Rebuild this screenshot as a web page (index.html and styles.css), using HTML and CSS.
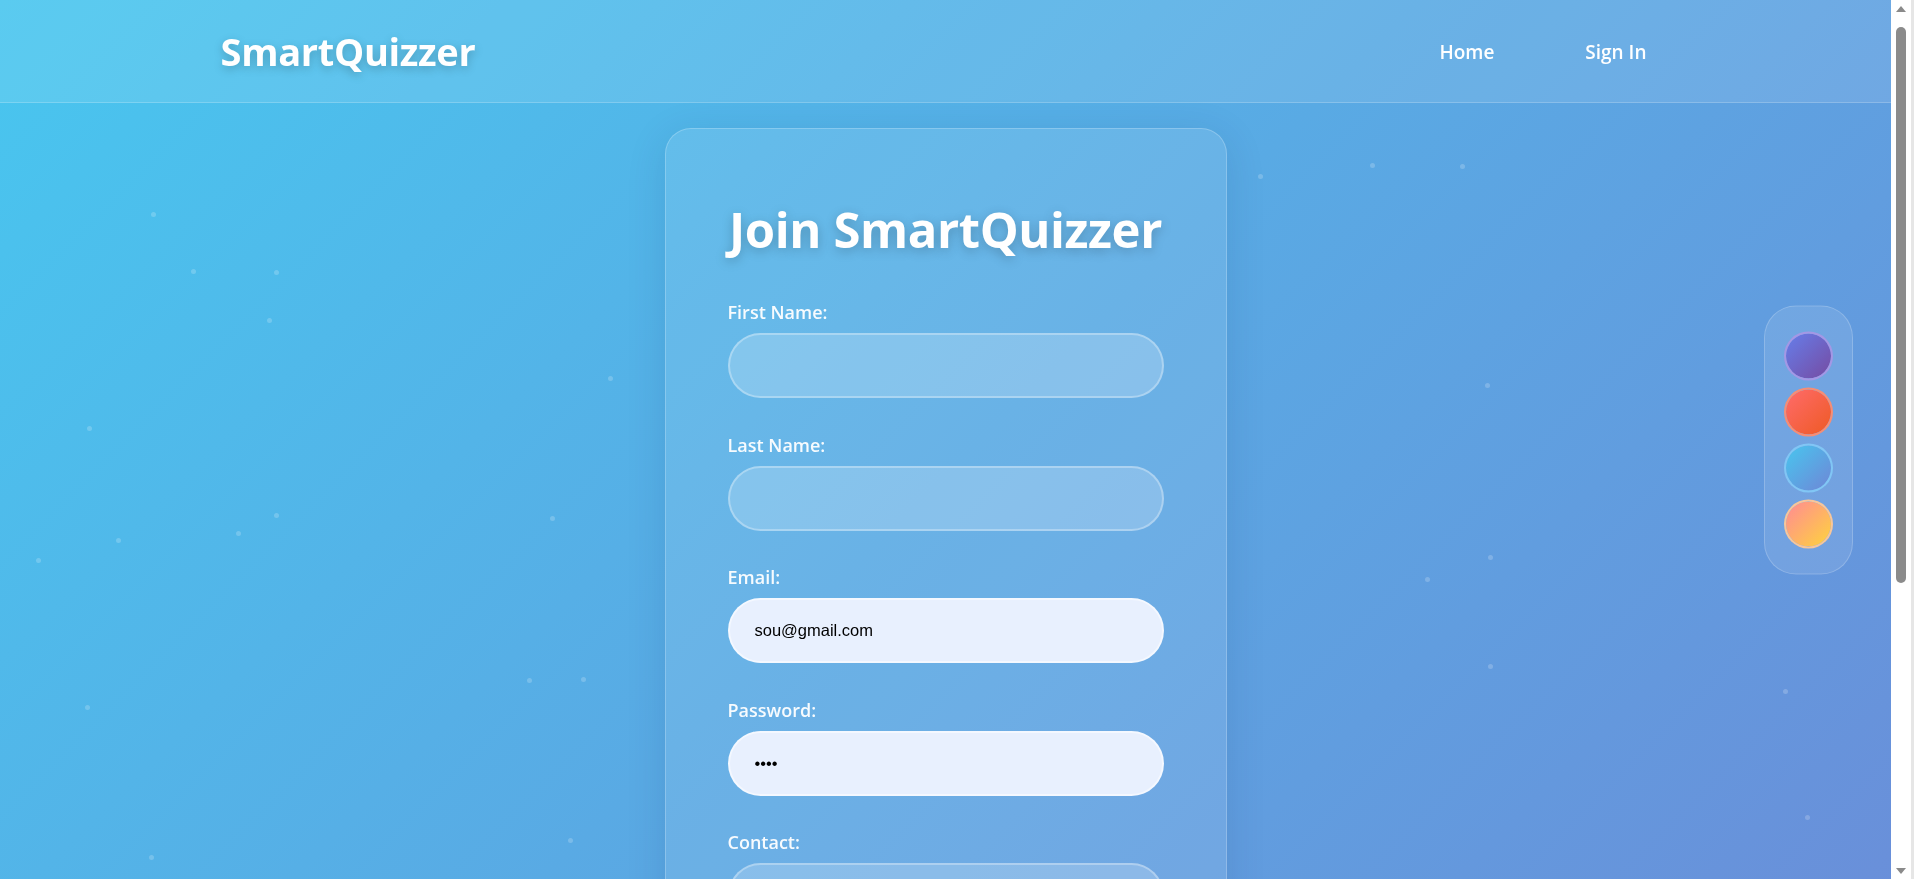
FILE: index.html
```html
<!DOCTYPE html>
<html lang="en">
<head>
<meta charset="utf-8">
<title>SmartQuizzer - Sign Up</title>
<link rel="stylesheet" href="styles.css">
</head>
<body>
<div class="particles" aria-hidden="true">
  <span class="dot" style="left:153px;top:214px"></span>
  <span class="dot" style="left:193px;top:271px"></span>
  <span class="dot" style="left:276px;top:272px"></span>
  <span class="dot" style="left:269px;top:320px"></span>
  <span class="dot" style="left:610px;top:378px"></span>
  <span class="dot" style="left:89px;top:428px"></span>
  <span class="dot" style="left:118px;top:540px"></span>
  <span class="dot" style="left:238px;top:533px"></span>
  <span class="dot" style="left:276px;top:515px"></span>
  <span class="dot" style="left:38px;top:560px"></span>
  <span class="dot" style="left:552px;top:518px"></span>
  <span class="dot" style="left:529px;top:680px"></span>
  <span class="dot" style="left:583px;top:679px"></span>
  <span class="dot" style="left:87px;top:707px"></span>
  <span class="dot" style="left:151px;top:857px"></span>
  <span class="dot" style="left:570px;top:840px"></span>
  <span class="dot" style="left:1260px;top:176px"></span>
  <span class="dot" style="left:1372px;top:165px"></span>
  <span class="dot" style="left:1462px;top:166px"></span>
  <span class="dot" style="left:1487px;top:385px"></span>
  <span class="dot" style="left:1490px;top:557px"></span>
  <span class="dot" style="left:1427px;top:579px"></span>
  <span class="dot" style="left:1490px;top:666px"></span>
  <span class="dot" style="left:1785px;top:691px"></span>
  <span class="dot" style="left:1807px;top:817px"></span>
</div>

<div class="page">
  <header class="site-header">
    <nav class="nav">
      <a class="logo" href="#">SmartQuizzer</a>
      <div class="nav-links">
        <a class="nav-link" href="#">Home</a>
        <a class="nav-link" href="#">Sign In</a>
      </div>
    </nav>
  </header>

  <main class="main">
    <section class="card">
      <h1 class="card-title">Join SmartQuizzer</h1>
      <form class="form">
        <div class="form-group">
          <label class="label" for="first">First Name:</label>
          <input class="input" id="first" type="text">
        </div>
        <div class="form-group">
          <label class="label" for="last">Last Name:</label>
          <input class="input" id="last" type="text">
        </div>
        <div class="form-group">
          <label class="label" for="email">Email:</label>
          <input class="input input-filled" id="email" type="email" value="sou@gmail.com">
        </div>
        <div class="form-group">
          <label class="label" for="password">Password:</label>
          <input class="input input-filled" id="password" type="password" value="1234">
        </div>
        <div class="form-group">
          <label class="label" for="contact">Contact:</label>
          <input class="input" id="contact" type="text">
        </div>
        <div class="form-group">
          <label class="label" for="role">Role:</label>
          <input class="input" id="role" type="text">
        </div>
        <button class="submit" type="button">Sign Up</button>
        <p class="switch">Already have an account? <a href="#">Sign In</a></p>
      </form>
    </section>
  </main>
</div>

<aside class="themes">
  <span class="swatch swatch-purple"></span>
  <span class="swatch swatch-sunset"></span>
  <span class="swatch swatch-ocean"></span>
  <span class="swatch swatch-peach"></span>
</aside>

<div class="scrollbar" aria-hidden="true">
  <span class="scroll-arrow scroll-up"></span>
  <span class="scroll-track"><span class="scroll-thumb"></span></span>
  <span class="scroll-arrow scroll-down"></span>
</div>
</body>
</html>
```

FILE: styles.css
```css
html {
  background: linear-gradient(135deg, #48c6ef 0%, #6f86d6 100%);
  min-height: 100%;
}

::-webkit-scrollbar {
  width: 0;
  height: 0;
}

body {
  margin: 0;
  min-height: 100vh;
  font-family: "Open Sans", "Noto Sans", "DejaVu Sans", sans-serif;
  color: #ffffff;
  position: relative;
}

.page {
  position: relative;
  margin-right: 23px;
}

.particles {
  position: fixed;
  top: -2px;
  left: -2px;
  right: 0;
  bottom: 0;
  pointer-events: none;
}

.dot {
  position: absolute;
  width: 5px;
  height: 5px;
  border-radius: 50%;
  background: rgba(255, 255, 255, 0.2);
}

.site-header {
  background: rgba(255, 255, 255, 0.1);
  border-bottom: 1px solid rgba(255, 255, 255, 0.2);
}

.nav {
  max-width: 1450px;
  margin: 0 auto;
  height: 102px;
  display: flex;
  align-items: center;
  justify-content: space-between;
}

.logo {
  font-size: 38px;
  font-weight: 700;
  color: #ffffff;
  text-decoration: none;
  text-shadow: 0 3px 10px rgba(0, 0, 0, 0.22);
  letter-spacing: -0.3px;
}

.nav-links {
  display: flex;
  gap: 43px;
}

.nav-link {
  padding: 9px 24px 7px;
  color: #ffffff;
  text-decoration: none;
  font-size: 19px;
  font-weight: 600;
}

.main {
  display: flex;
  justify-content: center;
  padding: 25px 0 79px;
}

.card {
  width: 562px;
  box-sizing: border-box;
  padding: 60px 62px;
  background: rgba(255, 255, 255, 0.1);
  border: 1px solid rgba(255, 255, 255, 0.22);
  border-radius: 26px;
  box-shadow: 0 8px 40px rgba(0, 40, 100, 0.12);
}

.card-title {
  margin: 11px 0 42px;
  font-size: 49px;
  line-height: 58px;
  font-weight: 700;
  text-align: center;
  letter-spacing: -0.4px;
  text-shadow: 0 3px 12px rgba(0, 0, 0, 0.22);
}

.form {
  display: flex;
  flex-direction: column;
}

.form-group {
  display: flex;
  flex-direction: column;
  margin-bottom: 34.5px;
}

.label {
  font-size: 18px;
  line-height: 24px;
  font-weight: 600;
  margin-bottom: 9px;
  color: rgba(255, 255, 255, 0.95);
}

.input {
  box-sizing: border-box;
  height: 65px;
  padding: 0 25px;
  border-radius: 33px;
  border: 2px solid rgba(255, 255, 255, 0.3);
  background: rgba(255, 255, 255, 0.2);
  font-family: "Liberation Sans", Arial, sans-serif;
  font-size: 16.5px;
  color: #000000;
  outline: none;
}

.input-filled {
  background: #e8f0fe;
  border-color: rgba(255, 255, 255, 0.5);
}

.submit {
  height: 56px;
  border: none;
  border-radius: 28px;
  background: rgba(255, 255, 255, 0.9);
  color: #4a8fdc;
  font-family: inherit;
  font-size: 18px;
  font-weight: 700;
}

.switch {
  margin: 20px 0 0;
  text-align: center;
  font-size: 16px;
  line-height: 24px;
}

.switch a {
  color: #ffffff;
  font-weight: 700;
}

.themes {
  position: fixed;
  right: 61px;
  top: 50%;
  transform: translateY(-50%);
  display: flex;
  flex-direction: column;
  gap: 7px;
  padding: 25px 19px;
  background: rgba(255, 255, 255, 0.1);
  border: 1px solid rgba(255, 255, 255, 0.2);
  border-radius: 32px;
}

.swatch {
  display: block;
  width: 49px;
  height: 49px;
  box-sizing: border-box;
  border-radius: 50%;
  border: 2px solid rgba(255, 255, 255, 0.3);
  background-clip: padding-box;
}

.swatch-purple {
  background-image: linear-gradient(135deg, #667eea 0%, #764ba2 100%);
  border-color: rgba(170, 150, 230, 0.9);
}

.swatch-sunset {
  background-image: linear-gradient(135deg, #ff6b6b 0%, #ee5a24 100%);
  border-color: rgba(255, 140, 110, 0.95);
}

.swatch-ocean {
  background-image: linear-gradient(135deg, #48c6ef 0%, #6f86d6 100%);
  border-color: rgba(130, 200, 245, 0.95);
}

.swatch-peach {
  background-image: linear-gradient(135deg, #ff8a95 0%, #fed43c 100%);
  border-color: rgba(255, 200, 150, 0.95);
}

/* simulated browser scrollbar */
.scrollbar {
  position: fixed;
  top: 0;
  right: 0;
  bottom: 0;
  width: 20px;
  background: #ffffff;
  border-right: 3px solid #e6e6e6;
  display: flex;
  flex-direction: column;
}

.scroll-arrow {
  height: 17px;
  display: flex;
  align-items: center;
  justify-content: center;
}

.scroll-up::before,
.scroll-down::before {
  content: "";
  width: 0;
  height: 0;
  border-left: 5px solid transparent;
  border-right: 5px solid transparent;
}

.scroll-up::before {
  border-bottom: 6px solid #8a8a8a;
}

.scroll-down::before {
  border-top: 6px solid #8a8a8a;
}

.scroll-track {
  flex: 1;
  padding: 10px 5px 0;
}

.scroll-thumb {
  display: block;
  height: 556px;
  width: 10px;
  border-radius: 5px;
  background: #8b8b8b;
}
```
